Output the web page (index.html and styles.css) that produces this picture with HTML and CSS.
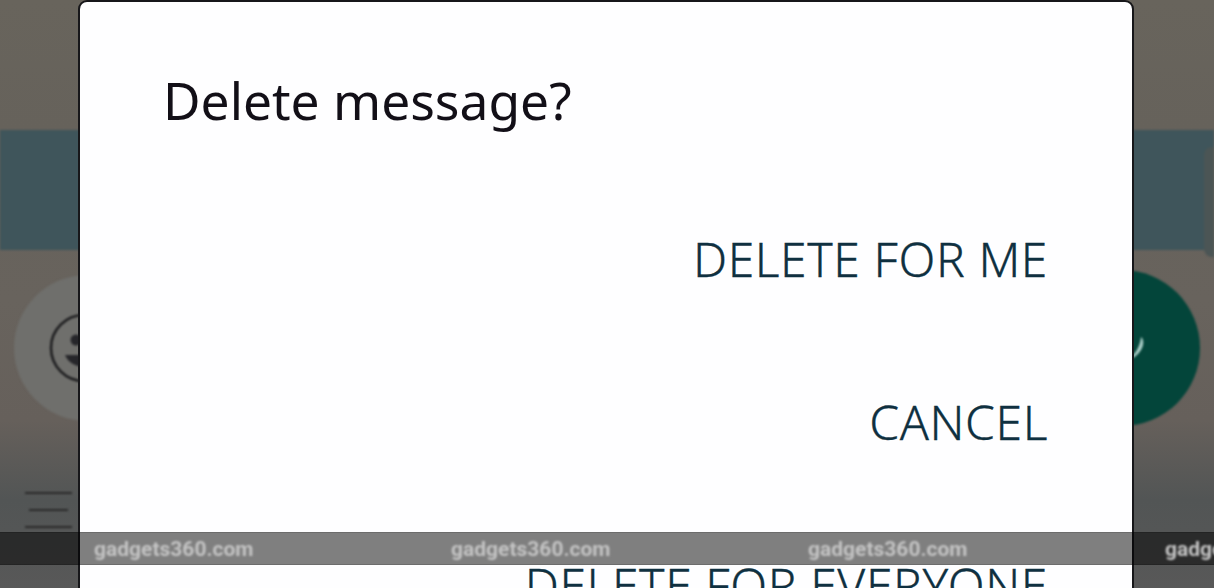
FILE: index.html
```html
<!DOCTYPE html>
<html lang="en">
<head>
    <meta charset="UTF-8">
    <meta name="viewport" content="width=device-width, initial-scale=1.0">
    <title>Delete message?</title>
    <link rel="stylesheet" href="styles.css">
</head>
<body>

<div class="screen">
    <!-- dimmed chat behind the dialog -->
    <div class="backdrop">
        <div class="band">
            <div class="band-input"></div>
        </div>
        <div class="composer">
            <div class="emoji-btn">
                <svg class="emoji-icon" width="70" height="70" viewBox="0 0 70 70">
                    <circle cx="35" cy="35" r="33" fill="none" stroke="#1c1c1e" stroke-width="2.5"/>
                    <circle cx="27" cy="27" r="5.5" fill="#26262a"/>
                    <path d="M16 42 H54 C50 58 22 58 16 42 Z" fill="#26262a"/>
                </svg>
            </div>
            <div class="send-btn">
                <svg class="send-icon" width="20" height="26" viewBox="0 0 20 26">
                    <path d="M1 24 C8 20 13 12 14 2 C17 4 17 10 14 15 C11 20 6 24 1 24 Z" fill="#a9cdc6"/>
                </svg>
            </div>
        </div>
        <div class="menu-lines">
            <span></span>
            <span class="short"></span>
            <span></span>
        </div>
    </div>

    <div class="dialog">
        <h1>Delete message?</h1>
        <div class="actions">
            <button>DELETE FOR ME</button>
            <button>CANCEL</button>
            <button>DELETE FOR EVERYONE</button>
        </div>
    </div>

    <div class="watermark">
        <span>gadgets360.com</span>
        <span>gadgets360.com</span>
        <span>gadgets360.com</span>
        <span>gadgets360.com</span>
    </div>
</div>

</body>
</html>
```

FILE: styles.css
```css
html, body { margin: 0; padding: 0; }
body { font-family: 'Noto Sans', 'Liberation Sans', sans-serif; background-color: #5c5c5c; overflow: hidden; }
.screen { position: relative; width: 1214px; height: 588px; overflow: hidden; background: linear-gradient(to bottom, #68645c 0, #66625b 130px, #68635d 300px, #66605b 420px, #525555 500px, #585858 588px); }
.backdrop { padding-top: 130px; filter: blur(1px); }
.band { height: 120px; background-color: #3f555b; display: flex; justify-content: flex-end; }
.band-input { width: 10px; height: 110px; margin-top: 17px; background-color: #4b5555; border-radius: 8px 0 0 8px; }
.composer { display: flex; justify-content: space-between; align-items: center; margin-top: 20px; padding: 0 14px; }
.emoji-btn { width: 146px; height: 146px; border-radius: 50%; background-color: #6f6f6c; display: flex; align-items: center; justify-content: center; }
.send-btn { width: 156px; height: 156px; border-radius: 50%; background-color: #03453a; display: flex; align-items: center; justify-content: center; }
.emoji-icon { display: block; margin-left: -6px; }
.send-icon { display: block; margin-left: 30px; }
.menu-lines { display: flex; flex-direction: column; align-items: flex-start; gap: 15px; margin: 66px 0 0 25px; width: 47px; }
.menu-lines span { display: block; width: 47px; height: 2px; background-color: #2b2b2b; }
.menu-lines .short { width: 39px; margin-left: 4px; }
.dialog { position: absolute; left: 80px; top: 2px; width: 1052px; height: 640px; background-color: #fefeff; border-radius: 7px; box-shadow: 0 0 0 2px #17171a; }
h1 { margin: 0; padding: 64px 0 0 83px; font-size: 51.5px; line-height: 68px; font-weight: 400; color: #120f17; }
.actions { display: flex; flex-direction: column; align-items: flex-end; gap: 125px; margin-top: 106px; padding-right: 84px; }
button { padding: 0; border: none; background: none; font-family: inherit; font-size: 48px; line-height: 38px; font-weight: 300; color: #0f3040; -webkit-text-stroke: 0.3px #0f3040; letter-spacing: 0.6px; cursor: pointer; }
.watermark { position: absolute; left: 0; top: 532px; width: 1214px; height: 33px; padding-left: 94px; box-sizing: border-box; display: flex; align-items: center; gap: 195px; background-color: rgba(0, 0, 0, 0.5); border-top: 1px solid rgba(0, 0, 0, 0.15); border-bottom: 1px solid rgba(0, 0, 0, 0.15); white-space: nowrap; }
.watermark span { flex: none; width: 162px; font-family: 'Roboto', sans-serif; font-size: 21px; font-weight: 700; color: #c4c4c4; filter: blur(0.8px); }
```
